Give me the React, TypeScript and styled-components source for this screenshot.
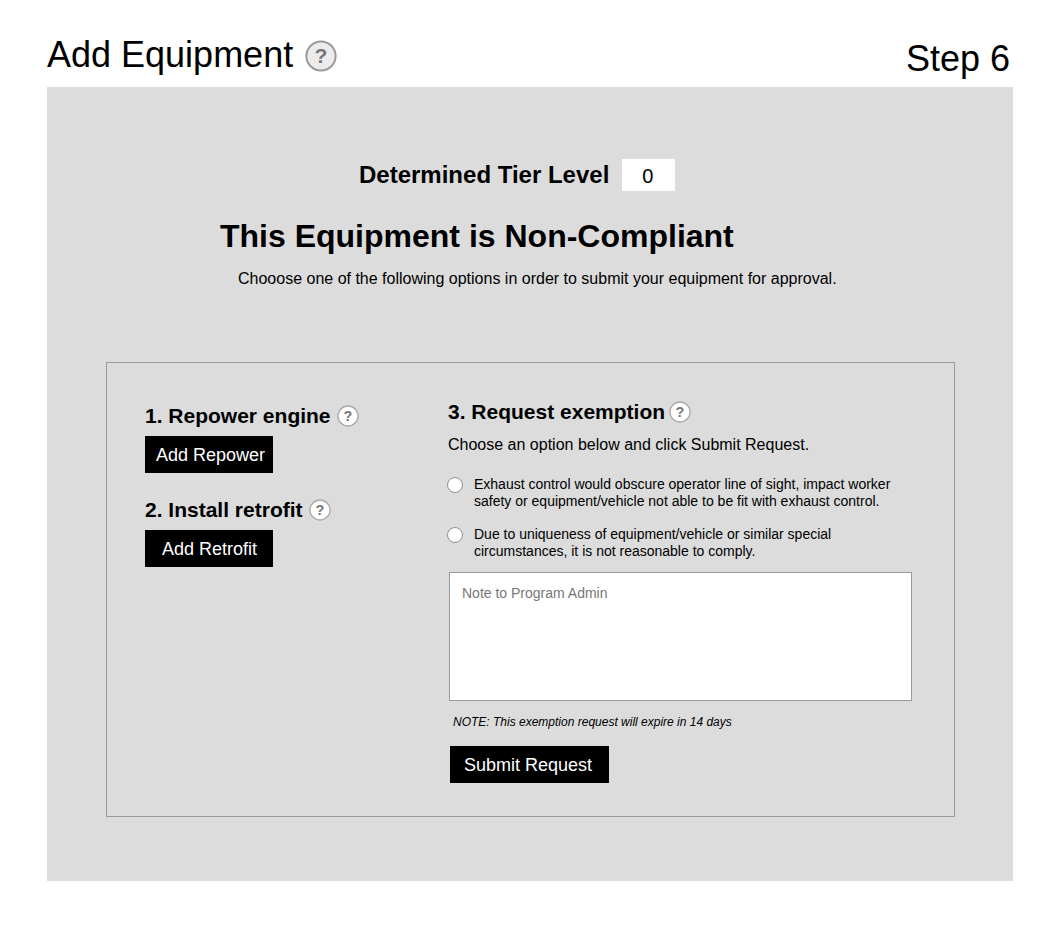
import React from 'react';
import styled, { createGlobalStyle } from 'styled-components';

const GlobalStyle = createGlobalStyle`
  html, body {
    margin: 0;
    padding: 0;
    background: #fff;
    color: #000;
    font-family: "Liberation Sans", Arial, sans-serif;
  }
`;

const Page = styled.div`
  width: 966px;
  height: 935px;
  margin-left: 47px;
  padding-top: 34px;
  box-sizing: border-box;
`;

const Header = styled.header`
  display: flex;
  justify-content: space-between;
  align-items: flex-start;
  height: 53px;
`;

const TitleGroup = styled.div`
  display: flex;
  align-items: center;
  gap: 12px;
`;

const Title = styled.h1`
  margin: 0;
  font-size: 36px;
  line-height: 41px;
  font-weight: 400;
`;

const Step = styled.div`
  font-size: 36px;
  line-height: 41px;
  margin: 4px 3px 0 0;
`;

const Panel = styled.main`
  height: 794px;
  background: #dcdcdc;
  padding-top: 72px;
  box-sizing: border-box;
`;

const TierRow = styled.div`
  display: flex;
  align-items: center;
  gap: 13px;
  margin-left: 312px;
  height: 32px;
`;

const TierLabel = styled.span`
  font-size: 24px;
  font-weight: 700;
`;

const TierValue = styled.div`
  width: 53px;
  height: 32px;
  box-sizing: border-box;
  padding-right: 2px;
  background: #fff;
  font-size: 20px;
  line-height: 35px;
  text-align: center;
`;

const Verdict = styled.h2`
  margin: 26px 0 0 173px;
  font-size: 32px;
  line-height: 38px;
  font-weight: 700;
`;

const Instruction = styled.p`
  margin: 15px 0 0 191px;
  font-size: 16px;
  line-height: 18px;
`;

const OptionsBox = styled.section`
  margin: 74px 0 0 59px;
  width: 849px;
  height: 455px;
  box-sizing: border-box;
  border: 1px solid #999;
  display: flex;
  padding: 36px 0 0 38px;
`;

const LeftColumn = styled.div`
  width: 303px;
  padding-top: 4px;
`;

const RightColumn = styled.div`
  flex: 1;
`;

const OptionHeading = styled.div<{ $gap: number }>`
  display: flex;
  align-items: center;
  gap: ${(p) => p.$gap}px;
  height: 26px;
`;

const OptionTitle = styled.h3`
  margin: 0;
  font-size: 21px;
  line-height: 26px;
  font-weight: 700;
`;

const Spaced = styled.div`
  margin-top: 24px;
`;

const BlackButton = styled.button<{ $width: number; $pl: number }>`
  display: block;
  width: ${(p) => p.$width}px;
  height: 37px;
  margin-top: 7px;
  border: 0;
  border-radius: 0;
  padding: 2px 0 0 ${(p) => p.$pl}px;
  background: #000;
  color: #fff;
  font-family: inherit;
  font-size: 18px;
  text-align: left;
`;

const HelpCircle = styled.svg<{ $size: number; $top?: number }>`
  width: ${(p) => p.$size}px;
  height: ${(p) => p.$size}px;
  margin-top: ${(p) => p.$top ?? 0}px;
  flex: none;
`;

const Lead = styled.p`
  margin: 11px 0 0;
  font-size: 16px;
  line-height: 18px;
`;

const RadioRow = styled.label<{ $gap: number }>`
  display: flex;
  gap: 11px;
  margin-top: ${(p) => p.$gap}px;
  margin-left: -1px;
  font-size: 14px;
  line-height: 17px;
`;

const RadioDot = styled.span`
  flex: none;
  width: 16px;
  height: 16px;
  margin-top: 1px;
  box-sizing: border-box;
  border-radius: 50%;
  background: #fff;
  border: 1px solid #8f8f8f;
`;

const NoteArea = styled.div`
  margin: 12px 0 0 1px;
  width: 463px;
  height: 129px;
  box-sizing: border-box;
  background: #fff;
  border: 1px solid #999;
  padding: 12px;
  color: #777;
  font-size: 14px;
  line-height: 17px;
`;

const ExpiryNote = styled.p`
  margin: 14px 0 0 5px;
  font-size: 12px;
  line-height: 14px;
  font-style: italic;
`;

const SubmitWrap = styled.div`
  margin: 17px 0 0 2px;
`;

const Help = ({ size, fill, stroke, top }: { size: number; fill: string; stroke: string; top?: number }) => (
  <HelpCircle $size={size} $top={top} viewBox="0 0 32 32">
    <circle cx="16" cy="16" r="14.6" fill={fill} stroke={stroke} strokeWidth="2" />
    <text x="16" y="23" textAnchor="middle" fontFamily="Liberation Sans" fontWeight="700" fontSize="21" fill="#777">?</text>
  </HelpCircle>
);

export default function App() {
  return (
    <>
      <GlobalStyle />
      <Page>
        <Header>
          <TitleGroup>
            <Title>Add Equipment</Title>
            <Help size={32} fill="#ececec" stroke="#999" top={2} />
          </TitleGroup>
          <Step>Step 6</Step>
        </Header>
        <Panel>
          <TierRow>
            <TierLabel>Determined Tier Level</TierLabel>
            <TierValue>0</TierValue>
          </TierRow>
          <Verdict>This Equipment is Non-Compliant</Verdict>
          <Instruction>Chooose one of the following options in order to submit your equipment for approval.</Instruction>
          <OptionsBox>
            <LeftColumn>
              <OptionHeading $gap={6}>
                <OptionTitle>1. Repower engine</OptionTitle>
                <Help size={22} fill="#fff" stroke="#aaa" />
              </OptionHeading>
              <BlackButton $width={128} $pl={11}>Add Repower</BlackButton>
              <Spaced>
                <OptionHeading $gap={6}>
                  <OptionTitle>2. Install retrofit</OptionTitle>
                  <Help size={22} fill="#fff" stroke="#aaa" />
                </OptionHeading>
              </Spaced>
              <BlackButton $width={128} $pl={17}>Add Retrofit</BlackButton>
            </LeftColumn>
            <RightColumn>
              <OptionHeading $gap={4}>
                <OptionTitle>3. Request exemption</OptionTitle>
                <Help size={22} fill="#fff" stroke="#aaa" />
              </OptionHeading>
              <Lead>Choose an option below and click Submit Request.</Lead>
              <RadioRow $gap={22}>
                <RadioDot />
                <span>
                  Exhaust control would obscure operator line of sight, impact worker
                  <br />
                  safety or equipment/vehicle not able to be fit with exhaust control.
                </span>
              </RadioRow>
              <RadioRow $gap={16}>
                <RadioDot />
                <span>
                  Due to uniqueness of equipment/vehicle or similar special
                  <br />
                  circumstances, it is not reasonable to comply.
                </span>
              </RadioRow>
              <NoteArea>Note to Program Admin</NoteArea>
              <ExpiryNote>NOTE: This exemption request will expire in 14 days</ExpiryNote>
              <SubmitWrap>
                <BlackButton $width={159} $pl={14}>Submit Request</BlackButton>
              </SubmitWrap>
            </RightColumn>
          </OptionsBox>
        </Panel>
      </Page>
    </>
  );
}
